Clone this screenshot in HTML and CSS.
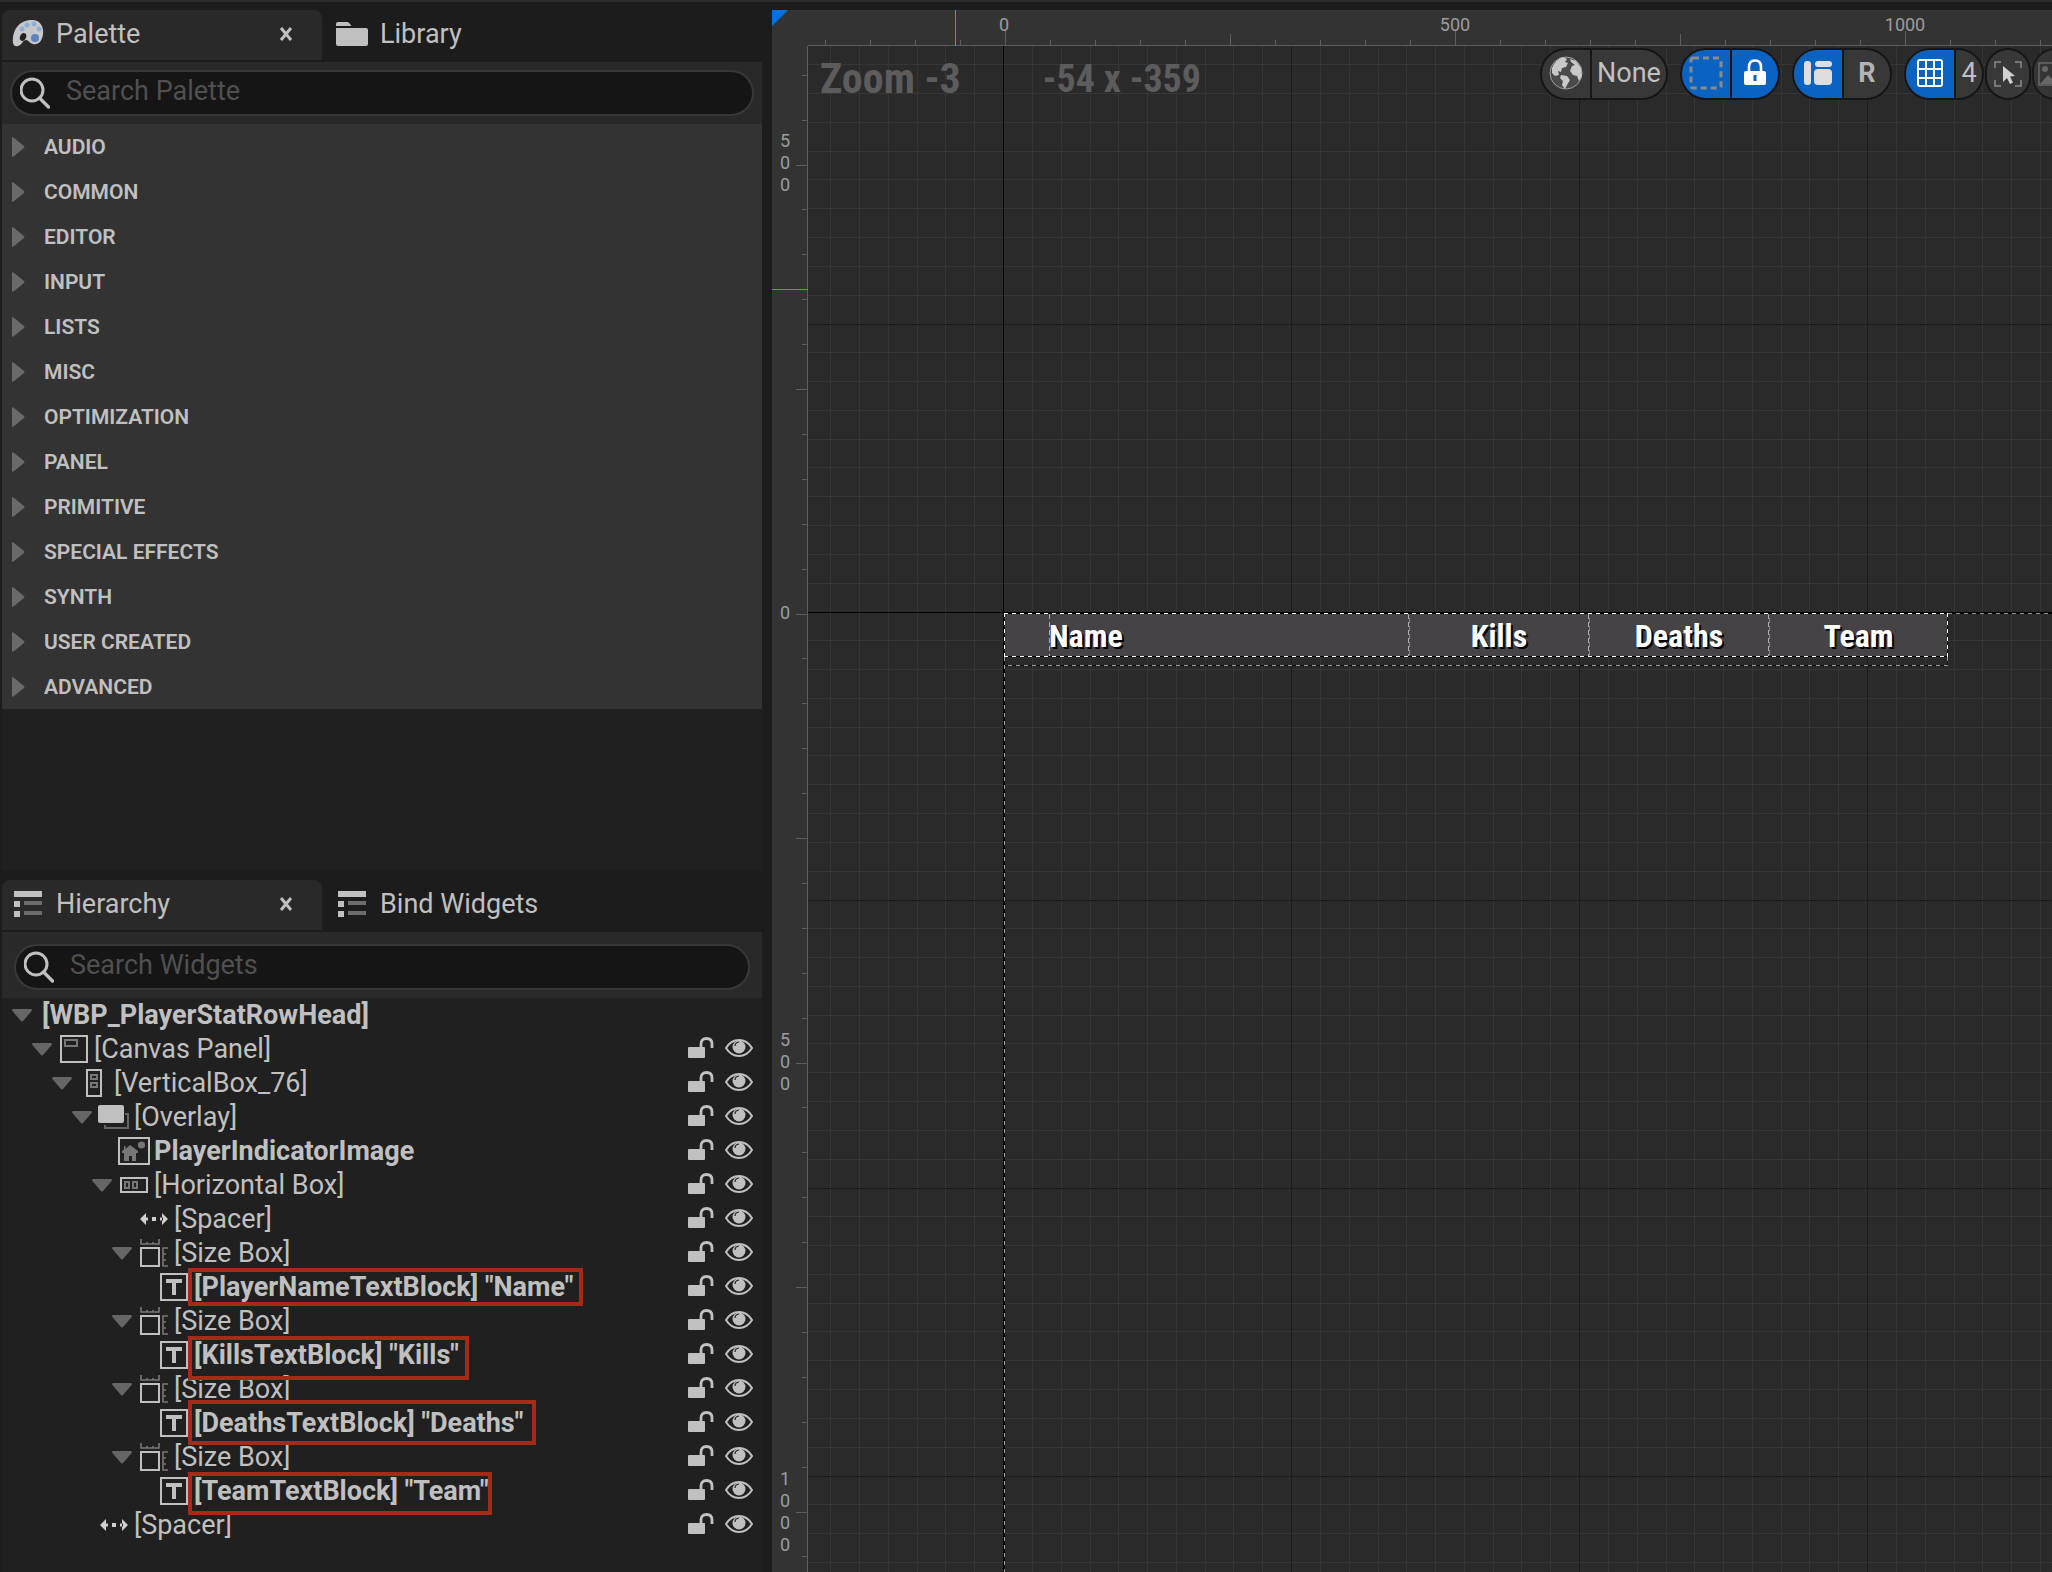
FILE: index.html
```
<!DOCTYPE html>
<html lang="en">
<head>
<meta charset="UTF-8" />
<meta name="viewport" content="width=device-width, initial-scale=1" />
<title>WBP_PlayerStatRowHead</title>
<link rel="stylesheet" href="styles.css">
</head>
<body>

  <!-- Icon sprite -->
  <svg class="sprite" aria-hidden="true">
    <symbol id="i-search" viewBox="0 0 30 32"><circle cx="12" cy="13" r="11" fill="none" stroke="#c0c0c0" stroke-width="3"/><path d="M19.5 21l9 9" stroke="#c0c0c0" stroke-width="3.4" stroke-linecap="round"/></symbol>
    <symbol id="i-tree" viewBox="0 0 28 26"><path d="M0 0h28v6H0zM0 10h6v6H0zM0 20h6v6H0z" fill="#c0c0c0"/><path d="M10 10h18v4H10zM10 20h18v4H10z" fill="#6c6c6c"/></symbol>
    <symbol id="i-close" viewBox="0 0 14 14"><path d="M2 1l10 12M12 1L2 13" stroke="#c0c0c0" stroke-width="3"/></symbol>
    <symbol id="i-right" viewBox="0 0 13 20"><path d="M0 1q0-1 1.500-.6L12 9q1 1 0 2L1.500 19.600Q0 20 0 19z" fill="#6a6a6a"/></symbol>
    <symbol id="i-down" viewBox="0 0 20 13"><path d="M1 0h18q1.500 .5 .6 2L11 12q-1 1-2 0L.4 2Q-.5 .5 1 0z" fill="#666"/></symbol>
    <symbol id="i-unlock" viewBox="0 0 26 22"><rect y="10" width="17" height="11" rx="1" fill="#c0c0c0"/><path d="M13 10V7q0-5.500 5.500-5.500T24 7v4" fill="none" stroke="#c0c0c0" stroke-width="2.800"/></symbol>
    <symbol id="i-eye" viewBox="0 0 28 18"><path d="M1 9Q6 1 14 1t13 8q-5 8-13 8T1 9z" fill="none" stroke="#c0c0c0" stroke-width="2"/><circle cx="14" cy="8" r="6.500" fill="#c0c0c0"/><path d="M10 7q0-3.500 4-4" fill="none" stroke="#202020" stroke-width="1.200"/></symbol>
    <symbol id="i-canvas" viewBox="0 0 28 28"><rect x="1" y="1" width="26" height="26" fill="none" stroke="#c0c0c0" stroke-width="2"/><rect x="5" y="5" width="12" height="6" fill="none" stroke="#777" stroke-width="2"/></symbol>
    <symbol id="i-vbox" viewBox="0 0 28 28"><g fill="none" stroke-width="2"><rect x="7" y="1" width="14" height="26" stroke="#c0c0c0"/><path d="M11 6h6v4h-6zM11 14h6v4h-6z" stroke="#777"/></g></symbol>
    <symbol id="i-overlay" viewBox="-2 0 32 28"><path d="M28 11v14H5v-3" fill="none" stroke="#666" stroke-width="2"/><path d="M25 11h4" stroke="#666" stroke-width="2"/><rect x="-2" y="2" width="26" height="18" rx="2" fill="#c0c0c0"/></symbol>
    <symbol id="i-image" viewBox="-2 0 32 28"><rect x="-1" y="1" width="30" height="26" fill="none" stroke="#c0c0c0" stroke-width="2"/><path d="M10 8l8 6v2h-2v8h-4v-5H9v5H4v-8H2v-2l2-1.500V9h1.500v3z" fill="#777"/><circle cx="21.500" cy="8" r="3.600" fill="#777"/></symbol>
    <symbol id="i-hbox" viewBox="0 0 28 28"><g fill="none" stroke-width="2"><rect x="1" y="7" width="26" height="14" stroke="#c0c0c0"/><path d="M5 11h4v6H5zM13 11h4v6h-4z" stroke="#777"/></g></symbol>
    <symbol id="i-spacer" viewBox="0 0 28 28"><path d="M0 14l6-6v12zM28 14l-6-6v12zM5 12.500h3v3H5zM20 12.500h3v3h-3zM12 12h4v4h-4z" fill="#d0d0d0"/></symbol>
    <symbol id="i-size" viewBox="0 0 28 28"><rect x="1" y="9" width="18" height="18" fill="none" stroke="#c0c0c0" stroke-width="2"/><path d="M1 0v5h18V0M7 5V3M13 5V3M28 9h-5v18h5M23 15h3M23 21h3" fill="none" stroke="#777" stroke-width="1.600"/></symbol>
    <symbol id="i-text" viewBox="0 0 28 28"><rect x="1" y="1" width="26" height="26" fill="none" stroke="#c0c0c0" stroke-width="2"/><path d="M6 6h16v4h-6v12h-4V10H6z" fill="#c0c0c0"/></symbol>
  </svg>

  <div class="editor">

    <div class="sidebar">
      <!-- Palette -->
      <section class="dock">
        <div class="tabs" role="tablist">
          <div class="tab active">
            <button class="tab-label" role="tab" aria-selected="true">
              <svg class="tab-icon" viewBox="0 0 32 32"><path d="M1 25C0 12 7 2 20 2c9 0 12 8 11 14-1 8-5 11-10 10-4-1-4-4-7-4-3 0-3 3-6 5-3 2-6 2-7-2z" fill="#c6c8cb"/><ellipse cx="11" cy="19" rx="3" ry="4" fill="#222" transform="rotate(25 11 19)"/><circle cx="23" cy="20" r="4" fill="#5b83c0"/><g fill="#8fb0d4"><circle cx="10" cy="11" r="2.500"/><circle cx="15" cy="7" r="2.500"/><circle cx="22" cy="6" r="2.500"/><circle cx="27" cy="11" r="2.500"/></g></svg>
              Palette
            </button>
            <button class="close" aria-label="Close Palette"><svg width="14" height="14"><use href="#i-close"/></svg></button>
          </div>
          <div class="tab">
            <button class="tab-label" role="tab" aria-selected="false">
              <svg class="tab-icon" viewBox="0 0 32 32"><path d="M0 8V6q0-2 2-2h9q2 0 3 2l1.500 2zM0 10h30q2 0 2 2v14q0 2-2 2H2q-2 0-2-2z" fill="#c0c0c0"/></svg>
              Library
            </button>
          </div>
        </div>
        <div class="panel">
          <label class="search">
            <svg width="30" height="32"><use href="#i-search"/></svg>
            <input type="search" placeholder="Search Palette" aria-label="Search Palette" />
          </label>
          <ul class="categories">
            <li><button><svg width="13" height="20"><use href="#i-right"/></svg>AUDIO</button></li>
            <li><button><svg width="13" height="20"><use href="#i-right"/></svg>COMMON</button></li>
            <li><button><svg width="13" height="20"><use href="#i-right"/></svg>EDITOR</button></li>
            <li><button><svg width="13" height="20"><use href="#i-right"/></svg>INPUT</button></li>
            <li><button><svg width="13" height="20"><use href="#i-right"/></svg>LISTS</button></li>
            <li><button><svg width="13" height="20"><use href="#i-right"/></svg>MISC</button></li>
            <li><button><svg width="13" height="20"><use href="#i-right"/></svg>OPTIMIZATION</button></li>
            <li><button><svg width="13" height="20"><use href="#i-right"/></svg>PANEL</button></li>
            <li><button><svg width="13" height="20"><use href="#i-right"/></svg>PRIMITIVE</button></li>
            <li><button><svg width="13" height="20"><use href="#i-right"/></svg>SPECIAL EFFECTS</button></li>
            <li><button><svg width="13" height="20"><use href="#i-right"/></svg>SYNTH</button></li>
            <li><button><svg width="13" height="20"><use href="#i-right"/></svg>USER CREATED</button></li>
            <li><button><svg width="13" height="20"><use href="#i-right"/></svg>ADVANCED</button></li>
          </ul>
        </div>
      </section>

      <!-- Hierarchy -->
      <section class="dock">
        <div class="tabs" role="tablist">
          <div class="tab active">
            <button class="tab-label" role="tab" aria-selected="true">
              <svg class="tab-icon" viewBox="-2 -3 32 32"><use href="#i-tree" width="28" height="26"/></svg>
              Hierarchy
            </button>
            <button class="close" aria-label="Close Hierarchy"><svg width="14" height="14"><use href="#i-close"/></svg></button>
          </div>
          <div class="tab">
            <button class="tab-label" role="tab" aria-selected="false">
              <svg class="tab-icon" viewBox="-2 -3 32 32"><use href="#i-tree" width="28" height="26"/></svg>
              Bind Widgets
            </button>
          </div>
        </div>
        <div class="panel">
          <label class="search inset">
            <svg width="30" height="32"><use href="#i-search"/></svg>
            <input type="search" placeholder="Search Widgets" aria-label="Search Widgets" />
          </label>
          <ul class="tree" role="tree">
            <li role="treeitem">
              <div class="row"><svg class="arrow"><use href="#i-down"/></svg><b class="name">[WBP_PlayerStatRowHead]</b></div>
              <ul role="group">
                <li role="treeitem">
                  <div class="row"><svg class="arrow"><use href="#i-down"/></svg><svg class="type"><use href="#i-canvas"/></svg><span class="name">[Canvas Panel]</span><button class="lock" aria-label="Lock"><svg><use href="#i-unlock"/></svg></button><button class="eye" aria-label="Visibility"><svg><use href="#i-eye"/></svg></button></div>
                  <ul role="group">
                    <li role="treeitem">
                      <div class="row"><svg class="arrow"><use href="#i-down"/></svg><svg class="type"><use href="#i-vbox"/></svg><span class="name">[VerticalBox_76]</span><button class="lock" aria-label="Lock"><svg><use href="#i-unlock"/></svg></button><button class="eye" aria-label="Visibility"><svg><use href="#i-eye"/></svg></button></div>
                      <ul role="group">
                        <li role="treeitem">
                          <div class="row"><svg class="arrow"><use href="#i-down"/></svg><svg class="type wide"><use href="#i-overlay"/></svg><span class="name">[Overlay]</span><button class="lock" aria-label="Lock"><svg><use href="#i-unlock"/></svg></button><button class="eye" aria-label="Visibility"><svg><use href="#i-eye"/></svg></button></div>
                          <ul role="group">
                            <li role="treeitem">
                              <div class="row"><span class="arrow"></span><svg class="type wide"><use href="#i-image"/></svg><b class="name">PlayerIndicatorImage</b><button class="lock" aria-label="Lock"><svg><use href="#i-unlock"/></svg></button><button class="eye" aria-label="Visibility"><svg><use href="#i-eye"/></svg></button></div>
                            </li>
                            <li role="treeitem">
                              <div class="row"><svg class="arrow"><use href="#i-down"/></svg><svg class="type"><use href="#i-hbox"/></svg><span class="name">[Horizontal Box]</span><button class="lock" aria-label="Lock"><svg><use href="#i-unlock"/></svg></button><button class="eye" aria-label="Visibility"><svg><use href="#i-eye"/></svg></button></div>
                              <ul role="group">
                                <li role="treeitem">
                                  <div class="row"><span class="arrow"></span><svg class="type"><use href="#i-spacer"/></svg><span class="name">[Spacer]</span><button class="lock" aria-label="Lock"><svg><use href="#i-unlock"/></svg></button><button class="eye" aria-label="Visibility"><svg><use href="#i-eye"/></svg></button></div>
                                </li>
                                <li role="treeitem">
                                  <div class="row"><svg class="arrow"><use href="#i-down"/></svg><svg class="type"><use href="#i-size"/></svg><span class="name">[Size Box]</span><button class="lock" aria-label="Lock"><svg><use href="#i-unlock"/></svg></button><button class="eye" aria-label="Visibility"><svg><use href="#i-eye"/></svg></button></div>
                                  <ul role="group">
                                    <li role="treeitem">
                                      <div class="row"><span class="arrow"></span><svg class="type"><use href="#i-text"/></svg><b class="name marked">[PlayerNameTextBlock] "Name"</b><button class="lock" aria-label="Lock"><svg><use href="#i-unlock"/></svg></button><button class="eye" aria-label="Visibility"><svg><use href="#i-eye"/></svg></button></div>
                                    </li>
                                  </ul>
                                </li>
                                <li role="treeitem">
                                  <div class="row"><svg class="arrow"><use href="#i-down"/></svg><svg class="type"><use href="#i-size"/></svg><span class="name">[Size Box]</span><button class="lock" aria-label="Lock"><svg><use href="#i-unlock"/></svg></button><button class="eye" aria-label="Visibility"><svg><use href="#i-eye"/></svg></button></div>
                                  <ul role="group">
                                    <li role="treeitem">
                                      <div class="row"><span class="arrow"></span><svg class="type"><use href="#i-text"/></svg><b class="name marked low">[KillsTextBlock] "Kills"</b><button class="lock" aria-label="Lock"><svg><use href="#i-unlock"/></svg></button><button class="eye" aria-label="Visibility"><svg><use href="#i-eye"/></svg></button></div>
                                    </li>
                                  </ul>
                                </li>
                                <li role="treeitem">
                                  <div class="row"><svg class="arrow"><use href="#i-down"/></svg><svg class="type"><use href="#i-size"/></svg><span class="name">[Size Box]</span><button class="lock" aria-label="Lock"><svg><use href="#i-unlock"/></svg></button><button class="eye" aria-label="Visibility"><svg><use href="#i-eye"/></svg></button></div>
                                  <ul role="group">
                                    <li role="treeitem">
                                      <div class="row"><span class="arrow"></span><svg class="type"><use href="#i-text"/></svg><b class="name marked tall">[DeathsTextBlock] "Deaths"</b><button class="lock" aria-label="Lock"><svg><use href="#i-unlock"/></svg></button><button class="eye" aria-label="Visibility"><svg><use href="#i-eye"/></svg></button></div>
                                    </li>
                                  </ul>
                                </li>
                                <li role="treeitem">
                                  <div class="row"><svg class="arrow"><use href="#i-down"/></svg><svg class="type"><use href="#i-size"/></svg><span class="name">[Size Box]</span><button class="lock" aria-label="Lock"><svg><use href="#i-unlock"/></svg></button><button class="eye" aria-label="Visibility"><svg><use href="#i-eye"/></svg></button></div>
                                  <ul role="group">
                                    <li role="treeitem">
                                      <div class="row"><span class="arrow"></span><svg class="type"><use href="#i-text"/></svg><b class="name marked snug">[TeamTextBlock] "Team"</b><button class="lock" aria-label="Lock"><svg><use href="#i-unlock"/></svg></button><button class="eye" aria-label="Visibility"><svg><use href="#i-eye"/></svg></button></div>
                                    </li>
                                  </ul>
                                </li>
                              </ul>
                            </li>
                          </ul>
                        </li>
                        <li role="treeitem">
                          <div class="row"><span class="arrow"></span><svg class="type"><use href="#i-spacer"/></svg><span class="name">[Spacer]</span><button class="lock" aria-label="Lock"><svg><use href="#i-unlock"/></svg></button><button class="eye" aria-label="Visibility"><svg><use href="#i-eye"/></svg></button></div>
                        </li>
                      </ul>
                    </li>
                  </ul>
                </li>
              </ul>
            </li>
          </ul>
        </div>
      </section>
    </div>

    <!-- Designer -->
    <main class="designer">
      <div class="corner"></div>

      <div class="ruler ruler-x">
        <svg width="100%" height="100%">
          <defs>
            <pattern id="ticks-x" x="197" y="0" width="450" height="36" patternUnits="userSpaceOnUse">
              <path d="M.5 21v14M45.500 30v5M90.500 30v5M135.500 30v5M180.500 30v5M225.500 24v11M270.500 30v5M315.500 30v5M360.500 30v5M405.500 30v5" stroke="#5e5e5e"/>
            </pattern>
          </defs>
          <rect width="100%" height="35" fill="url(#ticks-x)"/>
          <path d="M147.500 0v36" stroke="#23c423"/>
        </svg>
        <span class="mark x0">0</span>
        <span class="mark x500">500</span>
        <span class="mark x1000">1000</span>
      </div>

      <div class="ruler ruler-y">
        <svg width="100%" height="100%">
          <defs>
            <pattern id="ticks-y" x="0" y="568" width="36" height="449" patternUnits="userSpaceOnUse">
              <path d="M24 .5h11M30 44.500h5M30 89.500h5M30 134.500h5M30 179.500h5M24 224.500h11M30 269.500h5M30 314.500h5M30 359.500h5M30 404.500h5" stroke="#5e5e5e"/>
            </pattern>
          </defs>
          <rect width="35" height="100%" fill="url(#ticks-y)"/>
          <path d="M0 243.500h36" stroke="#23c423"/>
        </svg>
        <span class="mark y-500">5<br>0<br>0</span>
        <span class="mark y0">0</span>
        <span class="mark y500">5<br>0<br>0</span>
        <span class="mark y1000">1<br>0<br>0<br>0</span>
      </div>

      <div class="stage">
        <svg class="grid" width="100%" height="100%" aria-hidden="true">
          <defs>
            <pattern id="cells" x="195" y="566" width="288" height="288" patternUnits="userSpaceOnUse">
              <path d="M29.500 0v288M58.500 0v288M87.500 0v288M115.500 0v288M144.500 0v288M173.500 0v288M202.500 0v288M230.500 0v288M259.500 0v288M0 28.500h288M0 57.500h288M0 86.500h288M0 115.500h288M0 143.500h288M0 172.500h288M0 201.500h288M0 230.500h288M0 259.500h288" stroke="#363636"/>
              <path d="M.5 0v288M0 .5h288" stroke="#1c1c1c"/>
            </pattern>
          </defs>
          <rect width="100%" height="100%" fill="url(#cells)"/>
          <path d="M195.500 0v2000M0 566.500h4000" stroke="#000"/>
        </svg>

        <!-- The widget that is being edited -->
        <div class="stat-row">
          <span></span>
          <span>Name</span>
          <span>Kills</span>
          <span>Deaths</span>
          <span>Team</span>
        </div>

        <svg class="guides" width="100%" height="100%" aria-hidden="true">
          <g stroke="#000"><path d="M196 567.500h944M196 610.500h944M196 619.500h944M196.500 567v52M1139.500 567v52M196.500 619v2000M1140 567.500h2000"/></g>
          <g stroke="#fff" stroke-dasharray="4 4"><path d="M196 567.500h944M196 610.500h944M196.500 567v44M1139.500 567v44"/></g>
          <g stroke="#999" stroke-dasharray="4 4"><path d="M200 619.500h940M196.500 611v2000M1139.500 611v9M1140 567.500h2000"/></g>
          <g stroke="#aaa" stroke-dasharray="5 3"><path d="M241.500 568v42M600.500 568v42M780.500 568v42M960.500 568v42"/><path d="M601.500 572v38M781.500 572v38M961.500 572v38" stroke="#888"/></g>
        </svg>

        <div class="stage-bar">
          <span class="zoom">Zoom -3</span>
          <span class="coords">-54 x -359</span>
          <div class="tools">
            <div class="pill">
              <button class="half" aria-label="Localization"><svg width="34" height="36" viewBox="0 0 34 36"><circle cx="17" cy="18" r="16" fill="#4a4a4a" stroke="#a0a0a0"/><path d="M3 13Q6 5 14 2l4 2-2 3 3 1-2 4-4 1-1 4-3-1 1 4-4 1-3-3zM12 20l6 1 3 4-3 5-2 4-3-4 1-4-3-3zM21 4l6 2 5 7 1 8-3 5-2-5-4-1-3-4 2-5 3-1-4-3z" fill="#c8c8c8"/></svg></button>
              <button class="none">None</button>
            </div>
            <div class="pill on">
              <button class="half" aria-label="Show outlines"><svg width="34" height="34"><rect x="2" y="2" width="30" height="30" rx="2" fill="none" stroke="#8b8b8b" stroke-width="3" stroke-dasharray="6 4"/></svg></button>
              <button class="half" aria-label="Respect locks"><svg width="24" height="28"><path d="M6 13V8q0-6.500 6-6.500T18 8v5" fill="none" stroke="#fff" stroke-width="2.600"/><path d="M3 12h18q2 0 2 2v10q0 2-2 2H3q-2 0-2-2V14q0-2 2-2zm7.500 4v6h3v-6z" fill="#fff"/></svg></button>
            </div>
            <div class="pill">
              <button class="half on" aria-label="Flow direction"><svg width="30" height="26"><g fill="#dedede"><rect x="1" y="1" width="7" height="24" rx="3"/><rect x="12" y="1" width="17" height="6" rx="3"/><rect x="11" y="9" width="18" height="16" rx="4"/></g></svg></button>
              <button class="half letter">R</button>
            </div>
            <div class="pill tight">
              <button class="half on" aria-label="Grid snapping"><svg width="28" height="30"><path d="M2 4q0-2 2-2h20q2 0 2 2v22q0 2-2 2H4q-2 0-2-2zM10 2v26M18 2v26M2 11h24M2 20h24" fill="none" stroke="#fff" stroke-width="2"/></svg></button>
              <button class="snap">4</button>
            </div>
            <button class="round" aria-label="Zoom to fit"><svg width="28" height="28"><path d="M1 8V2h6M21 2h6v6M1 20v6h6M27 20v6h-6" fill="none" stroke="#8a8a8a" stroke-width="1.500"/><path d="M9 6l12 10-5 .5 3 6-3 1.500-3-6-4 4z" fill="#d0d0d0"/></svg></button>
            <button class="round dim" aria-label="Background image"><svg width="34" height="26"><path d="M1 2h32v22H1z" fill="none" stroke="#777" stroke-width="1.500"/><circle cx="7" cy="8" r="3" fill="#777"/><path d="M2 23l8-9 5 5 6-8 11 12z" fill="#777"/></svg></button>
          </div>
        </div>
      </div>
    </main>

  </div>

</body>
</html>
```

FILE: styles.css
```
/* Base styling */
* {
  box-sizing: border-box;
}
body {
  margin: 0;
  background: #1c1c1c;
  color: #c0c0c0;
  font-family: Roboto, sans-serif;
  font-size: 27px;
}
button {
  border: 0;
  padding: 0;
  background: none;
  color: inherit;
  font: inherit;
  cursor: pointer;
}
ul {
  margin: 0;
  padding: 0;
  list-style: none;
}
svg {
  display: block;
  flex: none;
}
.sprite {
  position: absolute;
  width: 0;
  height: 0;
}

.editor {
  display: grid;
  grid-template-columns: minmax(0, 38fr) minmax(0, 64fr);
  gap: 10px;
  height: 100vh;
  padding: 8px 0 0 2px;
  border-top: 2px solid #2b2b2b;
}

/* Left docks */
.sidebar {
  display: grid;
  grid-template-rows: minmax(0, 215fr) minmax(0, 173fr);
  gap: 10px;
}
.dock {
  display: flex;
  flex-direction: column;
  gap: 2px;
  min-height: 0;
}
.tabs {
  display: flex;
  height: 50px;
  flex: none;
}
.tab {
  display: flex;
  align-items: center;
  justify-content: space-between;
  padding: 0 29px 2px 10px;
}
.tab.active {
  width: 320px;
  margin-right: 4px;
  background: #292929;
  border-radius: 8px 8px 0 0;
}
.tab-label {
  display: flex;
  align-items: center;
  gap: 12px;
}
.tab-icon {
  width: 32px;
  height: 32px;
}
.panel {
  flex: 1;
  min-height: 0;
  background: #202020;
}

.search {
  display: flex;
  align-items: center;
  position: relative;
  padding: 8px;
  background: #292929;
}
.search.inset {
  padding: 12px 12px 8px;
}
.search svg {
  position: absolute;
  margin-left: 10px;
}
.search input {
  width: 100%;
  height: 46px;
  padding: 0 20px 5px 54px;
  border: 2px solid #383838;
  border-radius: 23px;
  background: #151515;
  color: #c0c0c0;
  font: inherit;
  outline: none;
}
.search input::placeholder {
  color: #505050;
}

.categories {
  background: #333;
}
.categories button {
  display: flex;
  align-items: center;
  gap: 19px;
  width: 100%;
  height: 45px;
  padding-left: 10px;
  font-size: 21px;
  font-weight: 600;
}

/* Widget tree */
.tree {
  margin: 0 3px 0 4px;
}
.tree ul {
  padding-left: 20px;
}
.row {
  display: flex;
  align-items: center;
  height: 34px;
  padding: 0 6px;
  white-space: nowrap;
}
.arrow {
  width: 20px;
  height: 13px;
  margin-right: 8px;
}
.arrow + .name {
  margin-left: 2px;
}
.type {
  width: 28px;
  height: 28px;
  margin-right: 6px;
}
.type.wide {
  width: 32px;
  margin: 0 4px 0 -2px;
}
.row button svg {
  width: 28px;
  height: 22px;
}
.row button {
  padding-bottom: 2px;
}
.row .name + .lock {
  margin-left: auto;
}
.lock {
  margin-right: 10px;
}

/* Red outlines round the text blocks */
.marked {
  position: relative;
}
.marked::after {
  content: "";
  position: absolute;
  inset: -3px -10px -3px -6px;
  border: 4px solid #a62b17;
}
.marked.low::after {
  bottom: -9px;
}
.marked.tall::after {
  inset: -7px -13px -6px -6px;
}
.marked.snug::after {
  right: -3px;
  bottom: -8px;
}

/* Designer with rulers */
.designer {
  display: grid;
  grid-template-columns: 36px minmax(0, 1fr);
  grid-template-rows: 36px minmax(0, 1fr);
  min-height: 0;
  overflow: hidden;
}
.corner {
  background: linear-gradient(135deg, #0070e0 11px, #333 12px);
}
.ruler {
  position: relative;
  overflow: hidden;
  background: #333;
  color: #9c9c9c;
  font-size: 18px;
  line-height: 22px;
  text-align: center;
}
.ruler-x {
  box-shadow: inset 0 -1px #5e5e5e;
}
.ruler-y {
  box-shadow: inset -1px 0 #5e5e5e;
}
.mark {
  position: absolute;
}
.ruler-x .mark {
  top: 4px;
  width: 60px;
}
.ruler-y .mark {
  left: 3px;
  width: 20px;
}
.x0 { left: 166px; }
.x500 { left: 617px; }
.x1000 { left: 1067px; }
.y-500 { top: 84px; }
.y0 { top: 556px; }
.y500 { top: 983px; }
.y1000 { top: 1422px; }

.stage {
  position: relative;
  overflow: hidden;
  background: #2a2a2a;
}
.grid,
.guides {
  position: absolute;
  top: 0;
  left: 0;
}

.stat-row {
  position: absolute;
  top: 567px;
  left: 196px;
  display: grid;
  grid-template-columns: 45px 360px 180px 180px 179px;
  align-items: center;
  height: 44px;
  padding-top: 2px;
  background: rgba(71, 68, 72, 0.95);
  color: #fff;
  font-family: 'Roboto Condensed', Roboto, sans-serif;
  font-size: 32px;
  font-weight: 700;
  text-align: center;
  text-shadow: 2px 2px 0 #000;
}
.stat-row span:nth-child(2) {
  text-align: left;
}

/* Overlay bar on the stage */
.stage-bar {
  position: relative;
  display: flex;
  align-items: center;
  padding: 2px 0 0 12px;
}
.zoom,
.coords {
  color: #5c5c5c;
  font-family: 'Roboto Condensed', Roboto, sans-serif;
  font-weight: 700;
  white-space: nowrap;
  padding-top: 6px;
}
.zoom {
  font-size: 42px;
}
.coords {
  margin-left: 82px;
  font-size: 38px;
}
.tools {
  display: flex;
  align-items: center;
  align-self: flex-start;
  gap: 12px;
  margin-left: auto;
  margin-right: -26px;
}
.pill,
.round {
  display: flex;
  height: 52px;
  border: 2px solid #161616;
  border-radius: 26px;
  background: #383838;
  overflow: hidden;
}
.pill button {
  display: flex;
  align-items: center;
  justify-content: center;
  padding-bottom: 2px;
}
.pill button + button {
  border-left: 2px solid #161616;
}
.half {
  width: 48px;
}
.pill .none {
  width: 76px;
}
.pill .snap {
  width: 28px;
}
.pill.on,
.half.on {
  background: #0b63c1;
}
.letter {
  font-size: 27px;
  font-weight: 700;
  color: #b4b4b4;
}
.round {
  align-items: center;
  justify-content: center;
  width: 46px;
}
.tight,
.tight + .round {
  margin-right: -11px;
}
.round.dim {
  opacity: 0.8;
}
```
